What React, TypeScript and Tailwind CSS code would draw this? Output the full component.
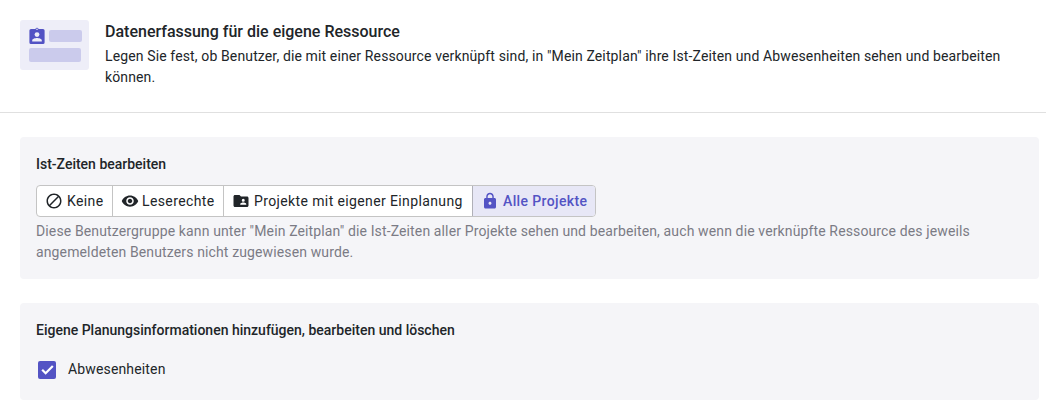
const FONT = "font-['Roboto',sans-serif]";

function HeaderIcon() {
  return (
    <div className="w-[69px] h-[50px] shrink-0 rounded-[3px] bg-[#eeeef8] flex flex-col gap-[4px] pt-[7px] pl-[9px]">
      <div className="flex gap-[4px]">
        <svg width="16" height="17" viewBox="0 0 16 17">
          <path
            fill="#5353c4"
            d="M2 2h4.4a1.7 1.7 0 0 1 3.2 0H14a1.6 1.6 0 0 1 1.6 1.6v11.8A1.6 1.6 0 0 1 14 17H2a1.6 1.6 0 0 1-1.6-1.6V3.6A1.6 1.6 0 0 1 2 2z"
          />
          <circle cx="8" cy="2.2" r="0.8" fill="#eeeef8" />
          <circle cx="8" cy="7.6" r="2.4" fill="#eeeef8" />
          <path fill="#eeeef8" d="M3.2 14.4v-1c0-1.6 3.2-2.4 4.8-2.4s4.8.8 4.8 2.4v1z" />
        </svg>
        <div className="w-[33px] h-[12px] mt-[3px] rounded-[2px] bg-[#cbcbec]" />
      </div>
      <div className="w-[52px] h-[14px] rounded-[2px] bg-[#cbcbec]" />
    </div>
  );
}

function BanIcon() {
  return (
    <svg width="18" height="18" viewBox="0 0 24 24" fill="#212529">
      <path d="M12 2C6.48 2 2 6.48 2 12s4.48 10 10 10 10-4.48 10-10S17.52 2 12 2zM4 12c0-4.42 3.58-8 8-8 1.85 0 3.55.63 4.9 1.69L5.69 16.9A7.902 7.902 0 0 1 4 12zm8 8c-1.85 0-3.55-.63-4.9-1.69L18.31 7.1A7.902 7.902 0 0 1 20 12c0 4.42-3.58 8-8 8z" />
    </svg>
  );
}

function EyeIcon() {
  return (
    <svg width="18" height="18" viewBox="0 0 24 24" fill="#212529">
      <path d="M12 4.5C7 4.5 2.73 7.61 1 12c1.73 4.39 6 7.5 11 7.5s9.27-3.11 11-7.5c-1.73-4.39-6-7.5-11-7.5zM12 17c-2.76 0-5-2.24-5-5s2.24-5 5-5 5 2.24 5 5-2.24 5-5 5zm0-8c-1.66 0-3 1.34-3 3s1.34 3 3 3 3-1.34 3-3-1.34-3-3-3z" />
    </svg>
  );
}

function FolderIcon() {
  return (
    <svg width="18" height="18" viewBox="0 0 24 24" fill="#212529">
      <path d="M20 6h-8l-2-2H4c-1.1 0-2 .9-2 2v12c0 1.1.9 2 2 2h16c1.1 0 2-.9 2-2V8c0-1.1-.9-2-2-2zm-5 3a2 2 0 1 1 0 4 2 2 0 0 1 0-4zm4 8h-8v-1c0-1.33 2.67-2 4-2s4 .67 4 2v1z" />
    </svg>
  );
}

function LockIcon() {
  return (
    <svg width="18" height="18" viewBox="0 0 24 24" fill="#5353c4">
      <path d="M18 8h-1V6c0-2.76-2.24-5-5-5S7 3.24 7 6v2H6c-1.1 0-2 .9-2 2v10c0 1.1.9 2 2 2h12c1.1 0 2-.9 2-2V10c0-1.1-.9-2-2-2zm-6 9c-1.1 0-2-.9-2-2s.9-2 2-2 2 .9 2 2-.9 2-2 2zm3.1-9H8.9V6c0-1.71 1.39-3.1 3.1-3.1 1.71 0 3.1 1.39 3.1 3.1v2z" />
    </svg>
  );
}

export default function App() {
  return (
    <div className={`${FONT} w-[1046px] h-[416px] overflow-hidden bg-white text-[14px] text-[#212529]`}>
      {/* Header */}
      <div className="h-[113px] border-b border-[#e0e0e0] flex gap-[16px] pt-[20px] pl-[20px] pr-[30px]">
        <HeaderIcon />
        <div>
          <div className="text-[16px] leading-[24px] font-medium">Datenerfassung für die eigene Ressource</div>
          <p className="leading-[21px] mt-[2px] tracking-[0.13px]">
            Legen Sie fest, ob Benutzer, die mit einer Ressource verknüpft sind, in "Mein Zeitplan" ihre Ist-Zeiten und Abwesenheiten sehen und bearbeiten können.
          </p>
        </div>
      </div>

      {/* Ist-Zeiten */}
      <div className="mt-[24px] mx-[20px] w-[1019px] h-[142px] rounded-[4px] bg-[#f5f5f8] pt-[17px] px-[16px]">
        <div className="leading-[21px] font-medium">Ist-Zeiten bearbeiten</div>
        <div className="mt-[10px] inline-flex h-[32px] rounded-[4px] border border-[#c4c4c4] bg-white overflow-hidden tracking-[0.38px]">
          <div className="w-[76px] flex items-center gap-[4px] pl-[8px] border-r border-[#c4c4c4]">
            <BanIcon />
            <span>Keine</span>
          </div>
          <div className="w-[111px] flex items-center gap-[3px] pl-[8px] border-r border-[#c4c4c4]">
            <EyeIcon />
            <span>Leserechte</span>
          </div>
          <div className="w-[249px] flex items-center gap-[4px] pl-[8px] border-r border-[#b0b0b8]">
            <FolderIcon />
            <span>Projekte mit eigener Einplanung</span>
          </div>
          <div className="w-[122px] flex items-center gap-[4px] pl-[8px] bg-[#e7e7f6] text-[#5353c4] font-medium">
            <LockIcon />
            <span>Alle Projekte</span>
          </div>
        </div>
        <p className="mt-[4px] leading-[21px] text-[#7b7b85] tracking-[0.13px]">
          Diese Benutzergruppe kann unter "Mein Zeitplan" die Ist-Zeiten aller Projekte sehen und bearbeiten, auch wenn die verknüpfte Ressource des jeweils angemeldeten Benutzers nicht zugewiesen wurde.
        </p>
      </div>

      {/* Planungsinformationen */}
      <div className="mt-[24px] mx-[20px] w-[1019px] h-[97px] rounded-[4px] bg-[#f5f5f8] pt-[17px] px-[18px]">
        <div className="-ml-[2px] leading-[21px] font-medium">Eigene Planungsinformationen hinzufügen, bearbeiten und löschen</div>
        <div className="mt-[18px] flex items-center gap-[12px]">
          <div className="w-[18px] h-[18px] rounded-[2px] bg-[#5353c4] flex items-center justify-center">
            <svg width="15" height="15" viewBox="0 0 24 24" fill="none" stroke="#fff" strokeWidth="3.6">
              <path d="M3.5 12.5l5.5 5.5L20.5 6.5" />
            </svg>
          </div>
          <span className="tracking-[0.15px]">Abwesenheiten</span>
        </div>
      </div>
    </div>
  );
}
